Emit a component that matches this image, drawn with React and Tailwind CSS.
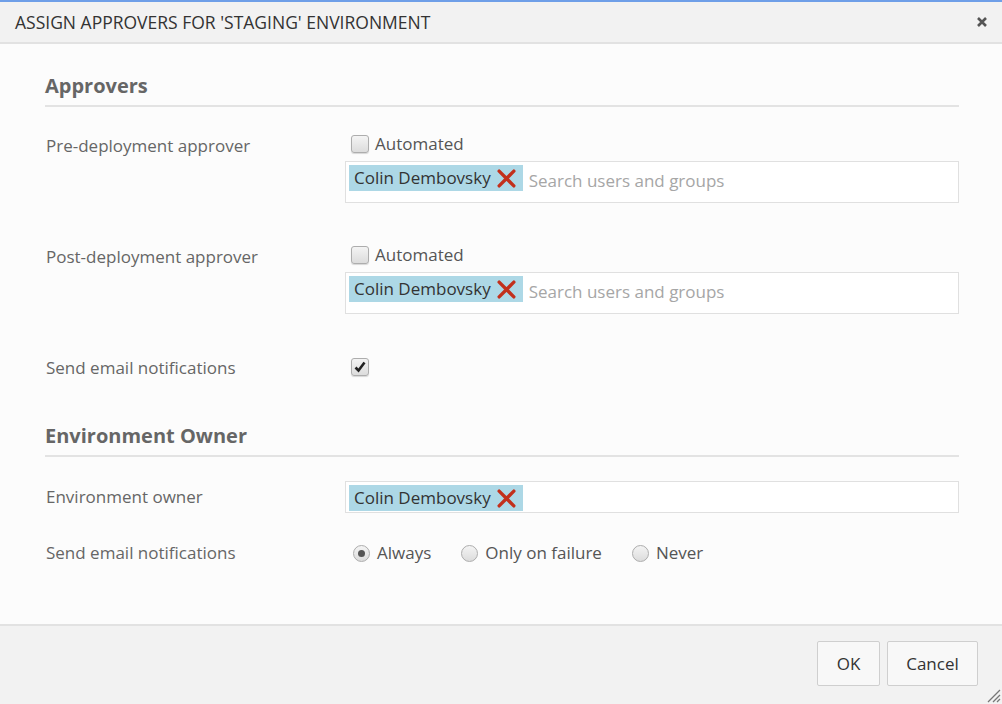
import { useState } from 'react';

const FONT = { fontFamily: '"Open Sans", "Noto Sans", sans-serif' };

function RemoveIcon() {
  return (
    <svg width="21" height="21" viewBox="0 0 20 20" className="ml-[5px] shrink-0">
      <path d="M3 3 L17 17 M17 3 L3 17" stroke="#c2301c" strokeWidth="3.2" strokeLinecap="round" />
    </svg>
  );
}

function Chip({ name }) {
  return (
    <span className="inline-flex items-center h-[26px] pl-[5px] pr-[6px] bg-[#add8e6] text-[#333] text-[17px] leading-[24px]">
      {name}
      <RemoveIcon />
    </span>
  );
}

function Checkbox({ checked }) {
  return (
    <span className="inline-flex items-center justify-center w-[18px] h-[18px] rounded-[3px] border border-[#adadad] bg-gradient-to-b from-[#f4f4f4] to-[#dcdcdc] shadow-[0_1px_1px_rgba(0,0,0,0.15)]">
      {checked && (
        <svg width="12" height="12" viewBox="0 0 12 12">
          <path d="M1.5 6.5 L4.5 9.5 L10.5 1.5" stroke="#222" strokeWidth="2.6" fill="none" />
        </svg>
      )}
    </span>
  );
}

function Radio({ checked }) {
  return (
    <span className="inline-flex items-center justify-center w-[17px] h-[17px] rounded-full border border-[#adadad] bg-gradient-to-b from-[#f4f4f4] to-[#dcdcdc]">
      {checked && <span className="w-[7px] h-[7px] rounded-full bg-[#555]" />}
    </span>
  );
}

function PickerInput({ name, search, tall }) {
  return (
    <div
      className={`flex items-start border border-[#e0e0e0] bg-white p-[3px] ${tall ? 'h-[42px]' : 'h-[32px]'}`}
    >
      <Chip name={name} />
      {search && (
        <span className="ml-[6px] mt-[4px] text-[17px] leading-[24px] text-[#a6a6a6]">Search users and groups</span>
      )}
    </div>
  );
}

function Row({ label, children, className = '' }) {
  return (
    <div className={`flex ${className}`}>
      <div className="w-[300px] shrink-0 pl-px text-[17px] leading-[24px] text-[#666]">{label}</div>
      <div className="flex-1">{children}</div>
    </div>
  );
}

function SectionTitle({ children }) {
  return (
    <div className="border-b-2 border-[#e3e3e3] pb-[6px]">
      <h2 className="text-[20px] leading-[26px] font-bold text-[#666]">{children}</h2>
    </div>
  );
}

function AutomatedCheck() {
  return (
    <div className="flex items-center gap-[6px] ml-[6px] -mt-[2px] h-[24px]">
      <Checkbox />
      <span className="text-[17px] leading-[24px] text-[#555]">Automated</span>
    </div>
  );
}

export default function App() {
  const [notify] = useState('always');

  return (
    <div style={FONT} className="w-[1002px] h-[704px] flex flex-col bg-[#fcfcfc] border-t-2 border-[#6f9fe8] overflow-hidden">
      <div className="h-[42px] shrink-0 flex items-center justify-between pl-[15px] pr-[14px] bg-[#f2f2f2] border-b-2 border-[#e2e2e2]">
        <span className="text-[17.5px] text-[#333]">ASSIGN APPROVERS FOR 'STAGING' ENVIRONMENT</span>
        <svg width="12" height="12" viewBox="0 0 12 12">
          <path d="M2 2 L10 10 M10 2 L2 10" stroke="#555" strokeWidth="2.6" />
        </svg>
      </div>

      <div className="flex-1 pl-[45px] pr-[43px] pt-[29px]">
        <SectionTitle>Approvers</SectionTitle>

        <Row label="Pre-deployment approver" className="mt-[27px]">
          <AutomatedCheck />
          <div className="mt-[5px]">
            <PickerInput name="Colin Dembovsky" search tall />
          </div>
        </Row>

        <Row label="Post-deployment approver" className="mt-[42px]">
          <AutomatedCheck />
          <div className="mt-[5px]">
            <PickerInput name="Colin Dembovsky" search tall />
          </div>
        </Row>

        <Row label="Send email notifications" className="mt-[42px]">
          <div className="ml-[6px] -mt-[1px]">
            <Checkbox checked />
          </div>
        </Row>

        <div className="mt-[43px]">
          <SectionTitle>Environment Owner</SectionTitle>
        </div>

        <Row label="Environment owner" className="mt-[28px]">
          <div className="-mt-[4px]">
            <PickerInput name="Colin Dembovsky" />
          </div>
        </Row>

        <Row label="Send email notifications" className="mt-[28px]">
          <div className="flex items-center h-[24px] ml-[8px] text-[17px] leading-[24px] text-[#555]">
            <label className="flex items-center gap-[7px]">
              <Radio checked={notify === 'always'} />
              Always
            </label>
            <label className="flex items-center gap-[7px] ml-[30px]">
              <Radio checked={notify === 'failure'} />
              Only on failure
            </label>
            <label className="flex items-center gap-[7px] ml-[30px]">
              <Radio checked={notify === 'never'} />
              Never
            </label>
          </div>
        </Row>
      </div>

      <div className="h-[80px] shrink-0 relative flex items-start justify-end gap-[7px] pt-[15px] pr-[24px] bg-[#f2f2f2] border-t-2 border-[#e2e2e2]">
        <button className="w-[63px] h-[45px] bg-[#f8f8f8] border border-[#cfcfcf] rounded-[2px] text-[17px] text-[#333]">
          OK
        </button>
        <button className="w-[91px] h-[45px] bg-[#f8f8f8] border border-[#cfcfcf] rounded-[2px] text-[17px] text-[#333]">
          Cancel
        </button>
        <svg width="16" height="16" viewBox="0 0 16 16" className="absolute right-[1px] bottom-[1px]">
          <path d="M15 3 L3 15 M15 8 L8 15 M15 12 L12 15" stroke="#777" strokeWidth="1.3" />
        </svg>
      </div>
    </div>
  );
}
